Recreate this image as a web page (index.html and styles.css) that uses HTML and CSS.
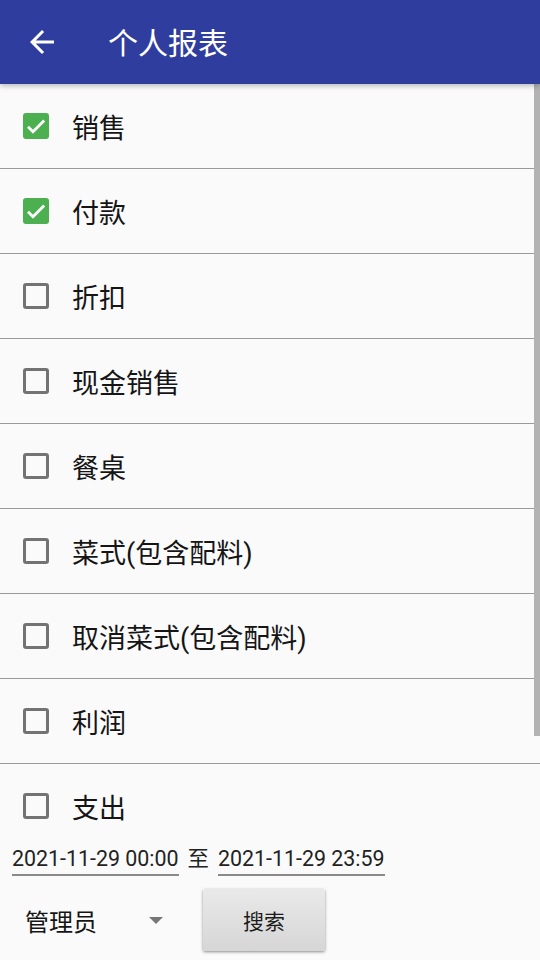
FILE: index.html
```html
<!DOCTYPE html>
<html>
	<head>
		<meta charset="UTF-8">
		<title>个人报表</title>
		<link rel="stylesheet" href="styles.css">
	</head>
	<body>
		<div class="page">
			<div class="toolbar">
				<svg class="back" viewBox="0 0 24 24" width="36" height="36">
					<path d="M20 11H7.83l5.59-5.59L12 4l-8 8 8 8 1.41-1.41L7.83 13H20v-2z" fill="#fff"/>
				</svg>
				<div class="title">个人报表</div>
			</div>
			<div class="list">
				<div class="row"><span class="box on"><svg viewBox="0 0 20 20" width="20" height="20"><path d="M2 10.8l5 5L18.2 4.6" fill="none" stroke="#fff" stroke-width="2.8"/></svg></span><span class="label">销售</span></div>
				<div class="row"><span class="box on"><svg viewBox="0 0 20 20" width="20" height="20"><path d="M2 10.8l5 5L18.2 4.6" fill="none" stroke="#fff" stroke-width="2.8"/></svg></span><span class="label">付款</span></div>
				<div class="row"><span class="box"></span><span class="label">折扣</span></div>
				<div class="row"><span class="box"></span><span class="label">现金销售</span></div>
				<div class="row"><span class="box"></span><span class="label">餐桌</span></div>
				<div class="row"><span class="box"></span><span class="label">菜式(包含配料)</span></div>
				<div class="row"><span class="box"></span><span class="label">取消菜式(包含配料)</span></div>
				<div class="row"><span class="box"></span><span class="label">利润</span></div>
				<div class="row"><span class="box"></span><span class="label">支出</span></div>
				<div class="thumb"></div>
			</div>
			<div class="dates">
				<span class="field">2021-11-29 00:00</span>
				<span class="to">至</span>
				<span class="field">2021-11-29 23:59</span>
			</div>
			<div class="bottom">
				<div class="spinner">
					<span class="who">管理员</span>
					<span class="arrow"></span>
				</div>
				<div class="btn">搜索</div>
			</div>
		</div>
	</body>
</html>
```

FILE: styles.css
```css
body{
	margin: 0;
	background: #fafafa;
	font-family: Roboto, "Noto Sans CJK SC", sans-serif;
	color: #151515;
}
.page{
	width: 540px;
	height: 960px;
	display: flex;
	flex-direction: column;
	overflow: hidden;
}
.toolbar{
	height: 84px;
	flex: none;
	background: #2f3e9e;
	display: flex;
	align-items: center;
	box-shadow: 0 2px 5px rgba(0,0,0,0.25);
	position: relative;
	z-index: 1;
}
.back{
	margin-left: 24px;
	margin-right: 48px;
}
.title{
	color: #fff;
	font-size: 30px;
	margin-top: -2px;
}
.list{
	flex: 1;
	overflow: hidden;
	position: relative;
}
.row{
	height: 84px;
	border-bottom: 1px solid #9a9a9a;
	display: flex;
	align-items: center;
	padding-left: 23px;
}
.box{
	width: 20px;
	height: 20px;
	border: 3px solid #737373;
	border-radius: 3px;
	margin-right: 23px;
	display: flex;
	align-items: center;
	justify-content: center;
	flex: none;
}
.box.on{
	background: #4caf50;
	border-color: #4caf50;
}
.box svg{
	display: block;
	flex: none;
}
.label{
	font-size: 27px;
}
.thumb{
	position: absolute;
	right: 0;
	top: 0;
	width: 6px;
	height: 652px;
	background: #b3b3b3;
}
.dates{
	height: 44px;
	flex: none;
	display: flex;
	align-items: flex-start;
	padding: 4px 0 0 12px;
	box-sizing: border-box;
	font-size: 21.4px;
	color: #222;
}
.field{
	line-height: 30px;
	border-bottom: 2px solid #8a8a8a;
}
.to{
	line-height: 30px;
	margin: 0 9px 0 9px;
}
.bottom{
	height: 76px;
	flex: none;
	display: flex;
	align-items: flex-start;
	padding-top: 5px;
	box-sizing: border-box;
}
.spinner{
	width: 178px;
	height: 62px;
	display: flex;
	align-items: center;
	padding-left: 25px;
	box-sizing: border-box;
}
.who{
	font-size: 24px;
	flex: 1;
}
.arrow{
	width: 0;
	height: 0;
	border-left: 7px solid transparent;
	border-right: 7px solid transparent;
	border-top: 7px solid #777;
	margin-right: 15px;
}
.btn{
	margin-left: 25px;
	width: 122px;
	height: 62px;
	border-radius: 2px;
	background: linear-gradient(#e9e9e9, #d6d6d6);
	box-shadow: 0 1px 3px rgba(0,0,0,0.45);
	display: flex;
	align-items: center;
	justify-content: center;
	font-size: 21px;
	color: #1c1c1c;
}
```
